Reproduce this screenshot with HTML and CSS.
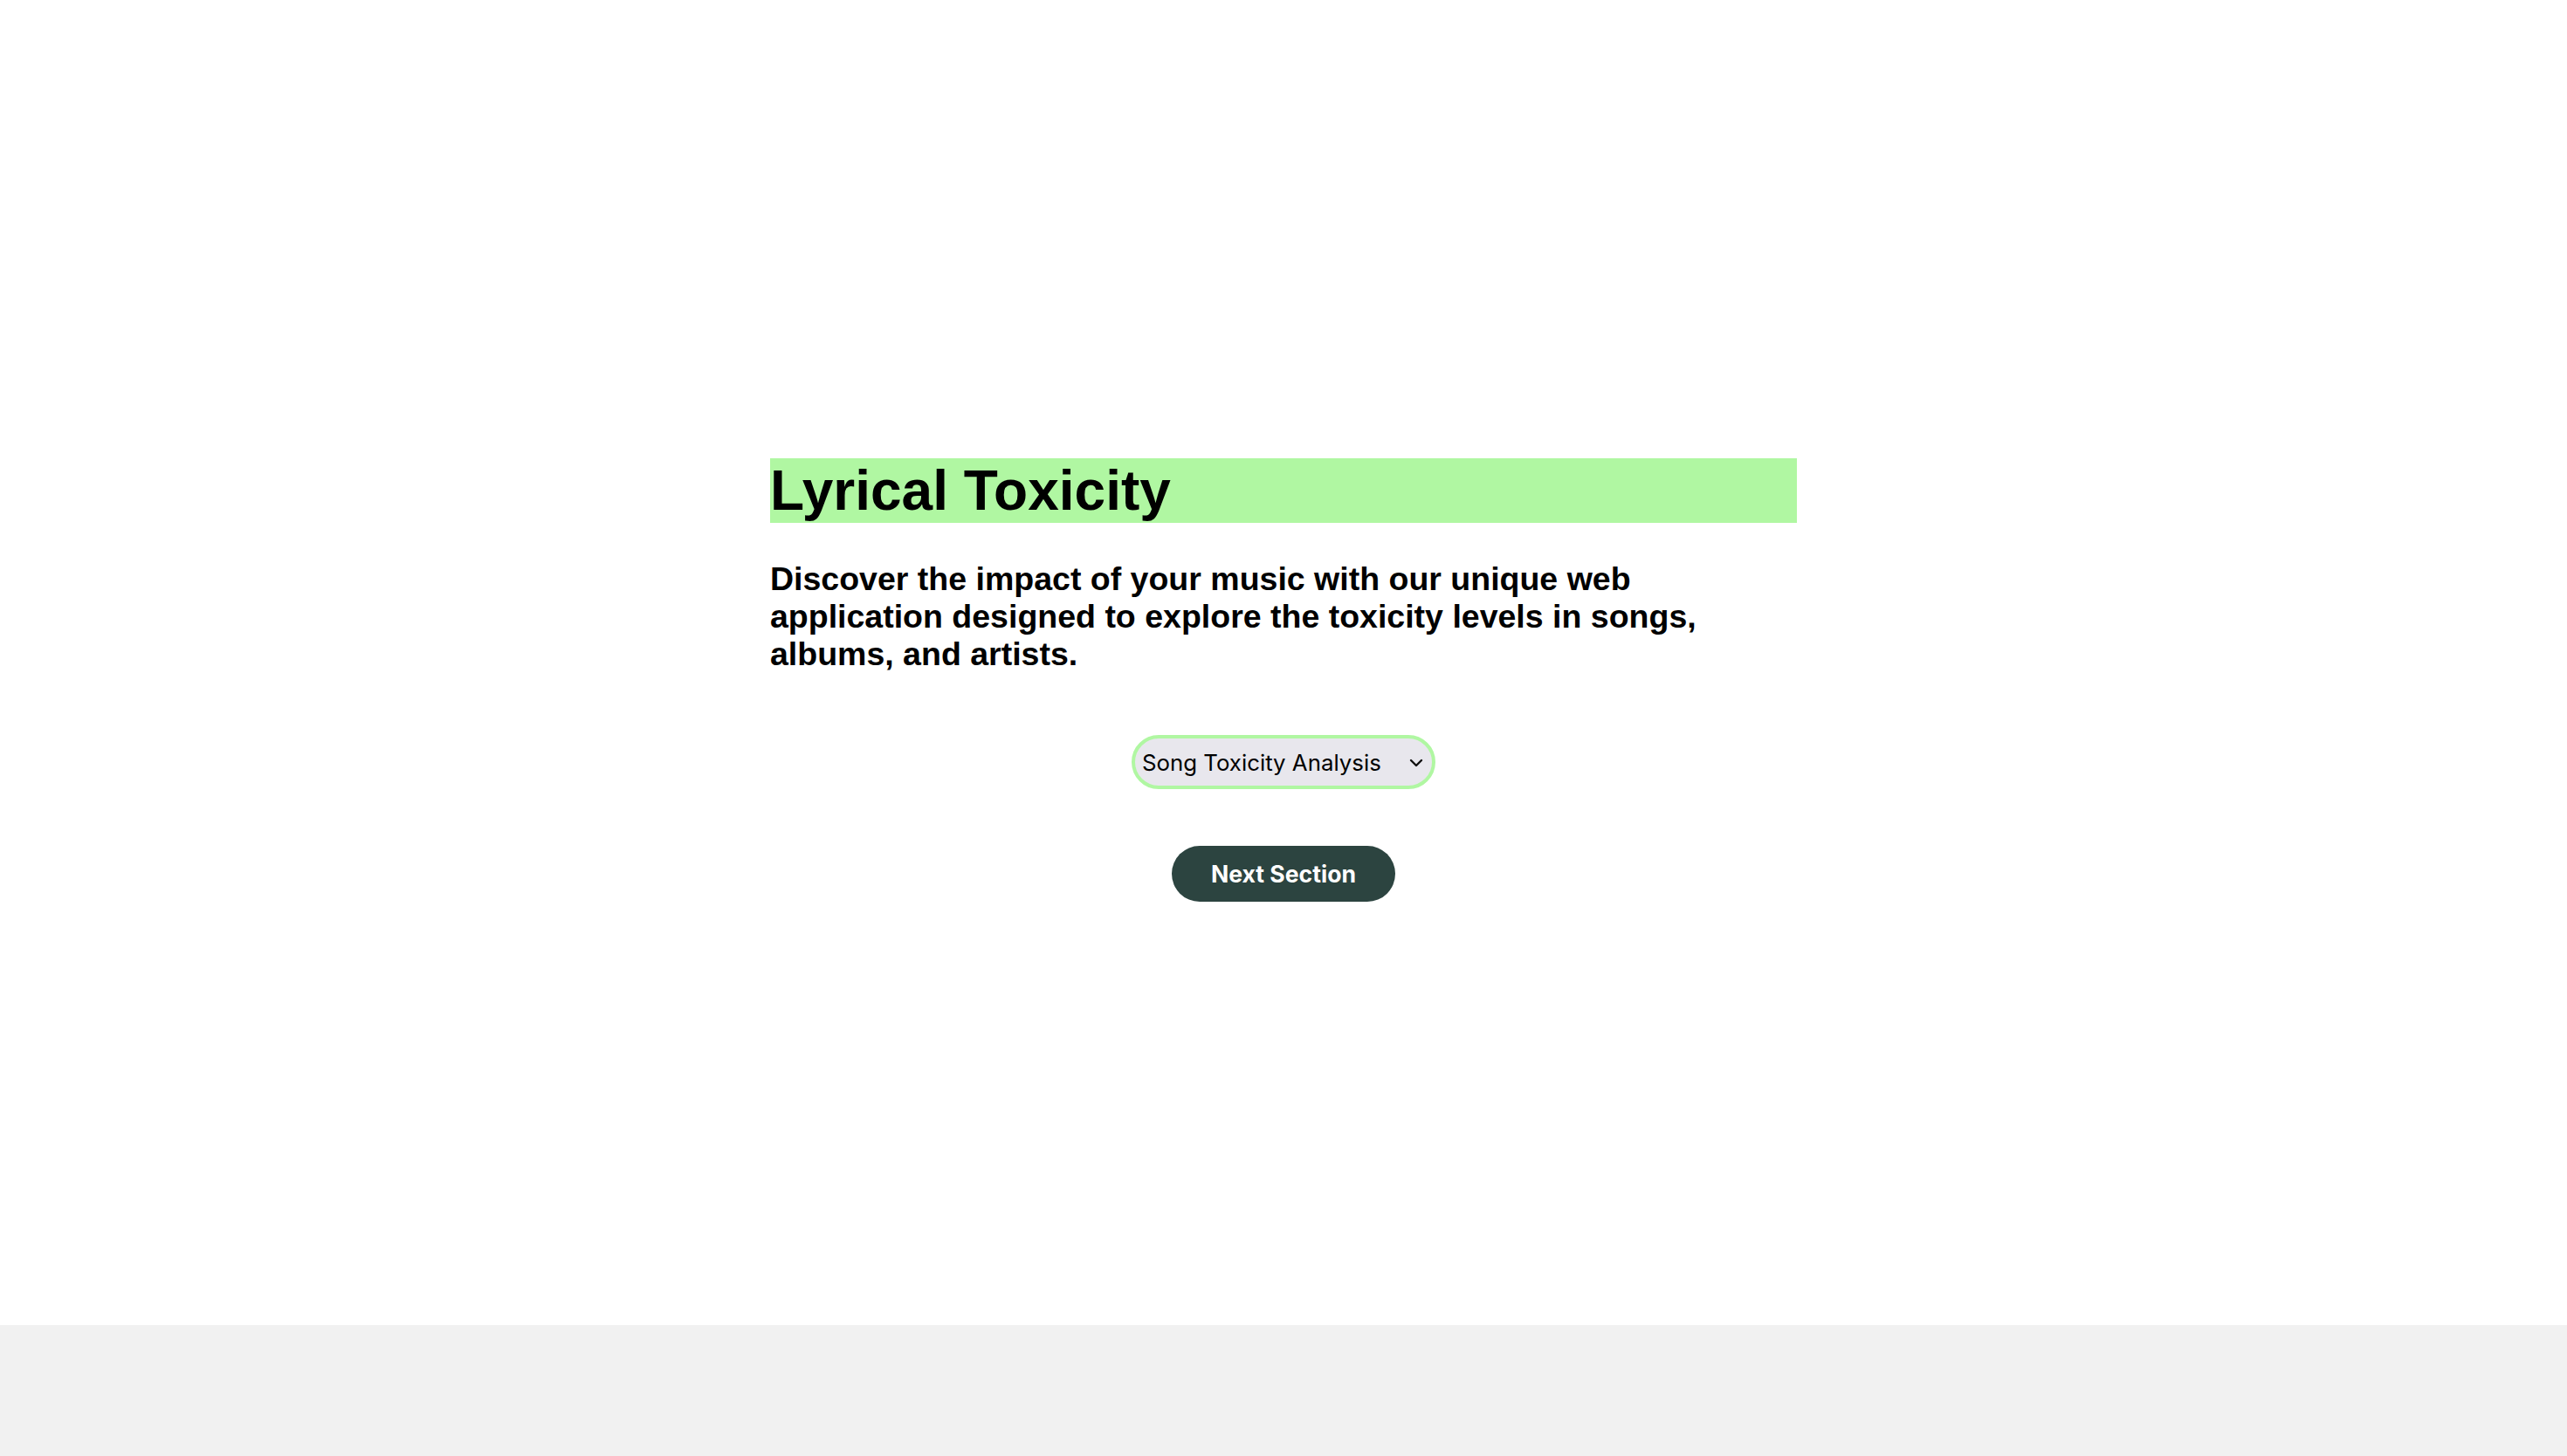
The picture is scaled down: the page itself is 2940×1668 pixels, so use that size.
FILE: index.html
```html
<!DOCTYPE html>
<html lang="en">
<head>
<meta charset="utf-8">
<title>Lyrical Toxicity</title>
<link rel="stylesheet" href="styles.css">
</head>
<body>
<main class="page">
  <section class="content">
    <h1 class="title">Lyrical Toxicity</h1>
    <p class="lead">Discover the impact of your music with our unique web application designed to explore the toxicity levels in songs, albums, and artists.</p>
    <div class="controls">
      <div class="select-wrap">
        <select class="select">
          <option>Song Toxicity Analysis</option>
          <option>Album Toxicity Analysis</option>
          <option>Artist Toxicity Analysis</option>
        </select>
        <svg class="chevron" width="16" height="10" viewBox="0 0 16 10" aria-hidden="true"><path d="M2 2 L8 8 L14 2" fill="none" stroke="#111" stroke-width="2.4" stroke-linecap="round" stroke-linejoin="round"/></svg>
      </div>
      <button class="next">Next Section</button>
    </div>
  </section>
</main>
<footer class="footer"></footer>
</body>
</html>
```
FILE: styles.css
```css
html, body {
  margin: 0;
  padding: 0;
  background: #ffffff;
}

.page {
  height: 1518px;
  box-sizing: border-box;
  padding-top: 525px;
}

.content {
  width: 1176px;
  margin: 0 auto;
}

.title {
  margin: 0;
  background: #b0f7a2;
  font-family: "Liberation Sans", Arial, sans-serif;
  font-weight: 700;
  font-size: 64px;
  line-height: 74px;
  color: #000;
}

.lead {
  margin: 43px 0 0;
  font-family: "Liberation Sans", Arial, sans-serif;
  font-weight: 700;
  font-size: 37.5px;
  line-height: 43px;
  color: #000;
}

.controls {
  margin-top: 71px;
  display: flex;
  flex-direction: column;
  align-items: center;
  gap: 65px;
}

.select-wrap {
  position: relative;
  width: 348px;
  height: 62px;
}

.select {
  appearance: none;
  -webkit-appearance: none;
  width: 348px;
  height: 62px;
  box-sizing: border-box;
  border: 4px solid #b0f7a2;
  border-radius: 31px;
  background: #e8e7ed;
  padding: 0 0 0 8px;
  font-family: Inter, "Noto Sans", sans-serif;
  font-size: 25.8px;
  color: #000;
  outline: none;
}

.chevron {
  position: absolute;
  right: 14px;
  top: 27px;
  pointer-events: none;
}

.next {
  width: 256px;
  height: 64px;
  border: none;
  border-radius: 32px;
  background: #2c4440;
  color: #ffffff;
  font-family: Inter, "Noto Sans", sans-serif;
  font-weight: 700;
  font-size: 26.6px;
  cursor: pointer;
}

.footer {
  height: 150px;
  background: #f1f1f1;
}
```
